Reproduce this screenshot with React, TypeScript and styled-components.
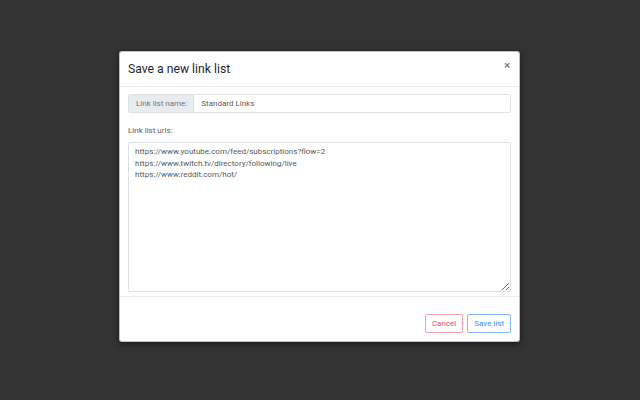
import React from 'react';
import styled, { createGlobalStyle } from 'styled-components';

const GlobalStyle = createGlobalStyle`
  html, body {
    margin: 0;
    padding: 0;
    height: 100%;
    background: #333333;
    font-family: Roboto, "Liberation Sans", Arial, sans-serif;
  }
  #root {
    height: 100%;
  }
`;

const Backdrop = styled.div`
  min-height: 100%;
  display: flex;
  flex-direction: column;
  align-items: center;
  padding-top: 51px;
  box-sizing: border-box;
`;

const Modal = styled.div`
  width: 401px;
  box-sizing: border-box;
  margin-left: -1px;
  background: #ffffff;
  border: 1px solid rgba(0, 0, 0, 0.25);
  border-radius: 3px;
  box-shadow: 0 2px 6px rgba(0, 0, 0, 0.5);
  display: flex;
  flex-direction: column;
`;

const Header = styled.div`
  height: 34px;
  display: flex;
  align-items: center;
  justify-content: space-between;
  padding: 0 9px 0 8px;
  border-bottom: 1px solid #e9ecef;
`;

const Title = styled.h5`
  margin: 0;
  font-size: 12.2px;
  font-weight: 400;
  color: #24282c;
  line-height: 1;
`;

const Close = styled.button`
  border: none;
  background: none;
  padding: 0;
  margin-top: -7px;
  font-family: inherit;
  font-size: 11px;
  font-weight: 700;
  line-height: 1;
  color: #808080;
  cursor: pointer;
`;

const Body = styled.div`
  padding: 7px 8px 4px 8px;
  display: flex;
  flex-direction: column;
`;

const InputGroup = styled.div`
  display: flex;
  height: 19px;
  border: 1px solid #dee2e6;
  border-radius: 2px;
  box-sizing: border-box;
  overflow: hidden;
`;

const Addon = styled.span`
  display: flex;
  align-items: center;
  padding: 0 6px 0 7px;
  background: #e9ecef;
  border-right: 1px solid #dee2e6;
  color: #6f757b;
  font-size: 8px;
  white-space: nowrap;
`;

const TextInput = styled.input`
  flex: 1;
  border: none;
  outline: none;
  padding: 0 7px;
  font-family: inherit;
  font-size: 8px;
  color: #5c5c5c;
  background: #fff;
`;

const Label = styled.label`
  margin: 12px 0 5px 0;
  font-size: 8px;
  line-height: 12px;
  color: #6b5566;
`;

const TextArea = styled.textarea`
  height: 150px;
  box-sizing: border-box;
  border: 1px solid #dee2e6;
  border-radius: 2px;
  padding: 3px 6px;
  font-family: inherit;
  font-size: 8px;
  line-height: 11.5px;
  color: #5a5a5a;
  outline: none;
  resize: vertical;
`;

const Footer = styled.div`
  border-top: 1px solid #e9ecef;
  display: flex;
  justify-content: flex-end;
  gap: 4px;
  padding: 17px 8px 8px 8px;
`;

const Button = styled.button<{ $tone: 'danger' | 'primary' }>`
  height: 19px;
  padding: 0 6px;
  background: #fff;
  border-radius: 2px;
  font-family: inherit;
  font-size: 8px;
  cursor: pointer;
  border: 1px solid ${(p) => (p.$tone === 'danger' ? '#f0a3ab' : '#85b8ff')};
  color: ${(p) => (p.$tone === 'danger' ? '#dc5263' : '#3d8cff')};
`;

const urls = [
  'https://www.youtube.com/feed/subscriptions?flow=2',
  'https://www.twitch.tv/directory/following/live',
  'https://www.reddit.com/hot/',
].join('\n');

export default function App() {
  return (
    <>
      <GlobalStyle />
      <Backdrop>
        <Modal>
          <Header>
            <Title>Save a new link list</Title>
            <Close aria-label="Close">×</Close>
          </Header>
          <Body>
            <InputGroup>
              <Addon>Link list name:</Addon>
              <TextInput defaultValue="Standard Links" />
            </InputGroup>
            <Label>Link list urls:</Label>
            <TextArea defaultValue={urls} spellCheck={false} />
          </Body>
          <Footer>
            <Button $tone="danger">Cancel</Button>
            <Button $tone="primary">Save list</Button>
          </Footer>
        </Modal>
      </Backdrop>
    </>
  );
}
